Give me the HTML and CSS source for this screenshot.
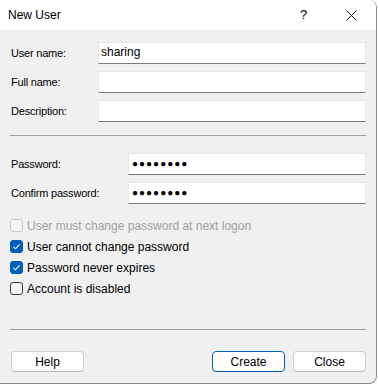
FILE: index.html
```html
<!DOCTYPE html>
<html>
<head>
<meta charset="utf-8">
<link rel="stylesheet" href="styles.css">
</head>
<body>
<div class="window">
  <div class="titlebar">
    <span class="title">New User</span>
    <span class="tb-help">?</span>
    <span class="tb-close">
      <svg width="11" height="11" viewBox="0 0 11 11"><path d="M0.5 0.5L10.5 10.5M10.5 0.5L0.5 10.5" stroke="#1a1a1a" stroke-width="1"/></svg>
    </span>
  </div>
  <div class="body">
    <div class="fields">
      <div class="row"><label class="lbl">User name:</label><div class="field name-field">sharing</div></div>
      <div class="row"><label class="lbl">Full name:</label><div class="field name-field"></div></div>
      <div class="row"><label class="lbl">Description:</label><div class="field name-field"></div></div>
    </div>
    <div class="sep sep1"></div>
    <div class="fields pw">
      <div class="row"><label class="lbl">Password:</label><div class="field pw-field"><span class="dots">●●●●●●●●</span></div></div>
      <div class="row"><label class="lbl">Confirm password:</label><div class="field pw-field"><span class="dots">●●●●●●●●</span></div></div>
    </div>
    <div class="checks">
      <div class="check disabled"><span class="box"></span><span class="ctext">User must change password at next logon</span></div>
      <div class="check on"><span class="box"><svg width="13" height="13" viewBox="0 0 13 13"><path d="M3.5 6.8L5.5 8.8L9.6 4.4" fill="none" stroke="#fff" stroke-width="1.1"/></svg></span><span class="ctext">User cannot change password</span></div>
      <div class="check on"><span class="box"><svg width="13" height="13" viewBox="0 0 13 13"><path d="M3.5 6.8L5.5 8.8L9.6 4.4" fill="none" stroke="#fff" stroke-width="1.1"/></svg></span><span class="ctext">Password never expires</span></div>
      <div class="check"><span class="box"></span><span class="ctext">Account is disabled</span></div>
    </div>
    <div class="sep sep2"></div>
    <div class="buttons">
      <button class="btn">Help</button>
      <span class="spacer"></span>
      <button class="btn default">Create</button>
      <button class="btn">Close</button>
    </div>
  </div>
</div>
</body>
</html>
```

FILE: styles.css
```css
html, body {
  margin: 0;
  padding: 0;
  background: #ffffff;
}
body {
  width: 378px;
  height: 385px;
  overflow: hidden;
  font-family: "Liberation Sans", Arial, sans-serif;
  color: #000;
}
.window {
  width: 376px;
  height: 383px;
  border-right: 1px solid #8c8c8c;
  border-bottom: 1px solid #8c8c8c;
  border-top-right-radius: 8px;
  border-bottom-right-radius: 8px;
  overflow: hidden;
  display: flex;
  flex-direction: column;
  background: #f0f0f0;
}
.titlebar {
  height: 30px;
  flex: none;
  background: #ffffff;
  display: flex;
  align-items: center;
  padding-left: 8px;
  font-size: 12px;
}
.title {
  flex: 1;
  color: #000;
  padding-bottom: 1px;
}
.tb-help {
  width: 10px;
  font-size: 13px;
  margin-right: 36px;
  padding-bottom: 1px;
}
.tb-close {
  width: 11px;
  height: 11px;
  margin-right: 19px;
  display: flex;
}
.body {
  flex: 1;
  padding: 12px 10px 0 11px;
  display: flex;
  flex-direction: column;
}
.fields {
  display: flex;
  flex-direction: column;
  gap: 7px;
}
.row {
  display: flex;
  align-items: center;
  height: 22px;
}
.lbl {
  font-size: 11px;
  color: #000;
  letter-spacing: -0.2px;
}
.fields:first-child .lbl { width: 87px; }
.pw .lbl { width: 117px; }
.field {
  box-sizing: border-box;
  height: 22px;
  flex: 1;
  background: #ffffff;
  border: 1px solid #e6e6e6;
  border-bottom: 1px solid #7a7a7a;
  font-size: 12px;
  padding: 2px 0 0 2px;
  line-height: 14px;
}
.dots {
  font-size: 10px;
  letter-spacing: 1px;
  line-height: 16px;
  padding-left: 1px;
}
.sep {
  height: 1px;
  background: #a0a0a0;
  margin-right: 0;
  margin-left: -1px;
}
.sep1 { margin-top: 13px; margin-bottom: 17px; }
.checks {
  margin-top: 11px;
  margin-left: -1px;
  display: flex;
  flex-direction: column;
}
.check {
  height: 21px;
  display: flex;
  align-items: center;
  font-size: 12px;
}
.box {
  box-sizing: border-box;
  width: 13px;
  height: 13px;
  border: 1px solid #3c3c3c;
  border-radius: 3px;
  background: #f7f7f7;
  margin-right: 4px;
  display: flex;
}
.check.on .box {
  background: #005fb8;
  border-color: #005fb8;
}
.check.on .box svg { margin: -1px; }
.check.disabled .box {
  border-color: #c8c8c8;
  background: #f5f5f5;
}
.check.disabled .ctext { color: #a0a0a0; }
.sep2 { margin-top: 30px; }
.buttons {
  margin-top: 21px;
  display: flex;
  gap: 8px;
}
.spacer { flex: 1; }
.btn {
  box-sizing: border-box;
  width: 73px;
  height: 21px;
  background: #fdfdfd;
  border: 1px solid #d0d0d0;
  border-bottom-color: #b8b8b8;
  border-radius: 4px;
  font-family: "Liberation Sans", Arial, sans-serif;
  font-size: 12px;
  color: #000;
  padding: 0;
}
.btn.default {
  border-color: #005fb8;
  border-width: 1px;
}
```
